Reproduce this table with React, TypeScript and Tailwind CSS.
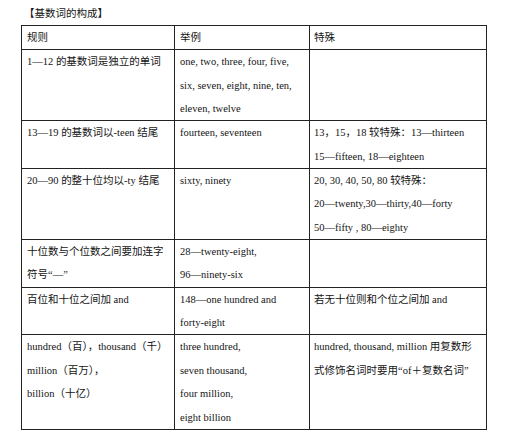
const font = { fontFamily: '"Liberation Serif", "Noto Sans CJK SC", serif' };

type Cell = string[];

const rows: [Cell, Cell, Cell][] = [
  [
    ["1—12 的基数词是独立的单词"],
    ["one, two, three, four, five,", "six, seven, eight, nine, ten,", "eleven, twelve"],
    [],
  ],
  [
    ["13—19 的基数词以-teen 结尾"],
    ["fourteen, seventeen"],
    ["13，15，18 较特殊：13—thirteen", "15—fifteen, 18—eighteen"],
  ],
  [
    ["20—90 的整十位均以-ty 结尾"],
    ["sixty, ninety"],
    ["20, 30, 40, 50, 80 较特殊：", "20—twenty,30—thirty,40—forty", "50—fifty , 80—eighty"],
  ],
  [
    ["十位数与个位数之间要加连字", "符号“—”"],
    ["28—twenty-eight,", "96—ninety-six"],
    [],
  ],
  [
    ["百位和十位之间加 and"],
    ["148—one hundred and", "forty-eight"],
    ["若无十位则和个位之间加 and"],
  ],
  [
    ["hundred（百），thousand（千）", "million（百万），", "billion（十亿）"],
    ["three hundred,", "seven thousand,", "four million,", "eight billion"],
    ["hundred, thousand, million 用复数形", "式修饰名词时要用“of＋复数名词”"],
  ],
];

function Lines({ lines }: { lines: Cell }) {
  return (
    <>
      {lines.map((l, i) => (
        <div key={i} className="whitespace-nowrap">
          {l}
        </div>
      ))}
    </>
  );
}

export default function App() {
  return (
    <div className="w-[512px] h-[444px] bg-white text-[#141414] pl-[21px] pt-[4px]" style={font}>
      <div className="h-[21px] pl-[3px] text-[10.5px] leading-[20px]">【基数词的构成】</div>
      <table className="table-fixed border-collapse w-[465px] text-[10.5px] leading-[23.35px]">
        <colgroup>
          <col className="w-[153px]" />
          <col className="w-[135px]" />
          <col className="w-[177px]" />
        </colgroup>
        <thead>
          <tr>
            <th className="border border-[#222] px-[5px] text-left font-normal align-top">规则</th>
            <th className="border border-[#222] px-[5px] text-left font-normal align-top">举例</th>
            <th className="border border-[#222] px-[4px] text-left font-normal align-top">特殊</th>
          </tr>
        </thead>
        <tbody>
          {rows.map((r, i) => (
            <tr key={i}>
              <td className="border border-[#222] px-[5px] align-top">
                <Lines lines={r[0]} />
              </td>
              <td className="border border-[#222] px-[5px] align-top">
                <Lines lines={r[1]} />
              </td>
              <td className="border border-[#222] px-[4px] align-top">
                <Lines lines={r[2]} />
              </td>
            </tr>
          ))}
        </tbody>
      </table>
    </div>
  );
}
